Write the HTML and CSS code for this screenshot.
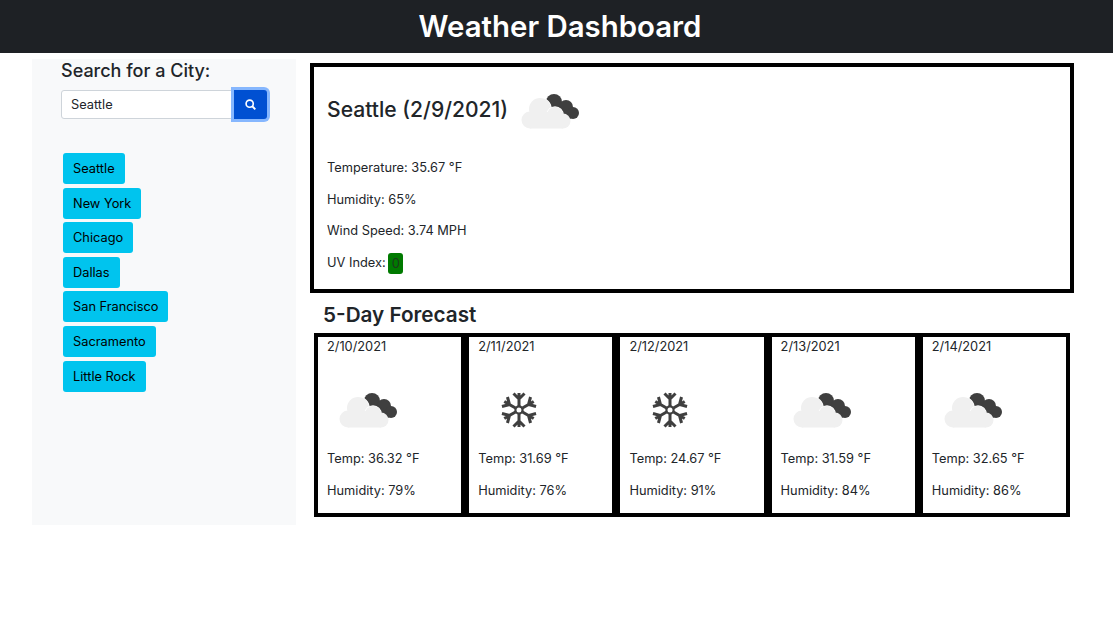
FILE: index.html
```html
<!DOCTYPE html>
<html lang="en">
<head>
  <meta charset="UTF-8" />
  <meta name="viewport" content="width=device-width, initial-scale=1.0"/>
  <title>Weather Dashboard</title>
  <link rel="stylesheet" href="styles.css">
</head>
<body>
  <svg class="icon-defs" aria-hidden="true">
    <symbol id="icon-clouds" viewBox="0 0 70 50">
      <circle cx="38" cy="17" r="8" fill="#3f3f3f"/>
      <circle cx="50" cy="22" r="7" fill="#3f3f3f"/>
      <circle cx="57" cy="28" r="6" fill="#3f3f3f"/>
      <path d="M31 17l20 8 5 8-8 3z" fill="#3f3f3f"/>
      <g fill="#f0f0f0" stroke="#fff" stroke-width="1.5" paint-order="stroke">
        <circle cx="24" cy="24" r="11"/>
        <circle cx="39" cy="30" r="8"/>
      </g>
      <g fill="#f0f0f0">
        <circle cx="14" cy="35" r="8.5"/>
        <circle cx="47" cy="36" r="7.5"/>
        <rect x="14" y="27" width="33" height="16.5"/>
      </g>
    </symbol>
    <symbol id="icon-snow" viewBox="0 0 50 50">
      <g fill="none" stroke="#3f3f3f" stroke-width="3">
        <path d="M24 22V9M18.5 9.5l5.500 5.500 5.500-5.500"/>
        <path d="M24 22V9M18.5 9.5l5.500 5.500 5.500-5.500" transform="rotate(60 24 26)"/>
        <path d="M24 22V9M18.5 9.5l5.500 5.500 5.500-5.500" transform="rotate(120 24 26)"/>
        <path d="M24 22V9M18.5 9.5l5.500 5.500 5.500-5.500" transform="rotate(180 24 26)"/>
        <path d="M24 22V9M18.5 9.5l5.500 5.500 5.500-5.500" transform="rotate(240 24 26)"/>
        <path d="M24 22V9M18.5 9.5l5.500 5.500 5.500-5.500" transform="rotate(300 24 26)"/>
        <circle cx="24" cy="26" r="3.6" stroke-width="2.2"/>
      </g>
    </symbol>
  </svg>

  <header class="top-bar">
    <h1>Weather Dashboard</h1>
  </header>

  <div class="page">
    <aside class="sidebar">
      <h2 class="search-title">Search for a City:</h2>
      <div class="search-group">
        <input class="search-input" type="text" value="Seattle" />
        <button class="search-btn" aria-label="Search">
          <svg viewBox="0 0 16 16" width="11" height="11" fill="none" stroke="#fff">
            <circle cx="6.8" cy="6.8" r="5.2" stroke-width="2.4"/>
            <path d="M10.6 10.6L15 15" stroke-width="2.8"/>
          </svg>
        </button>
      </div>
      <ul class="city-list">
        <li><button class="city-btn">Seattle</button></li>
        <li><button class="city-btn">New York</button></li>
        <li><button class="city-btn">Chicago</button></li>
        <li><button class="city-btn">Dallas</button></li>
        <li><button class="city-btn">San Francisco</button></li>
        <li><button class="city-btn">Sacramento</button></li>
        <li><button class="city-btn">Little Rock</button></li>
      </ul>
    </aside>

    <main class="content">
      <section class="current">
        <div class="current-head">
          <h2>Seattle (2/9/2021)</h2>
          <svg class="current-icon"><use href="#icon-clouds"/></svg>
        </div>
        <p>Temperature: 35.67 °F</p>
        <p>Humidity: 65%</p>
        <p>Wind Speed: 3.74 MPH</p>
        <p>UV Index: <span class="uv">0</span></p>
      </section>

      <h2 class="forecast-title">5-Day Forecast</h2>
      <div class="forecast">
        <div class="day">
          <div class="day-date">2/10/2021</div>
          <svg class="day-icon"><use href="#icon-clouds"/></svg>
          <p>Temp: 36.32 °F</p>
          <p>Humidity: 79%</p>
        </div>
        <div class="day">
          <div class="day-date">2/11/2021</div>
          <svg class="day-icon"><use href="#icon-snow"/></svg>
          <p>Temp: 31.69 °F</p>
          <p>Humidity: 76%</p>
        </div>
        <div class="day">
          <div class="day-date">2/12/2021</div>
          <svg class="day-icon"><use href="#icon-snow"/></svg>
          <p>Temp: 24.67 °F</p>
          <p>Humidity: 91%</p>
        </div>
        <div class="day">
          <div class="day-date">2/13/2021</div>
          <svg class="day-icon"><use href="#icon-clouds"/></svg>
          <p>Temp: 31.59 °F</p>
          <p>Humidity: 84%</p>
        </div>
        <div class="day">
          <div class="day-date">2/14/2021</div>
          <svg class="day-icon"><use href="#icon-clouds"/></svg>
          <p>Temp: 32.65 °F</p>
          <p>Humidity: 86%</p>
        </div>
      </div>
    </main>
  </div>
</body>
</html>
```

FILE: styles.css
```css
* {
  box-sizing: border-box;
}
body {
  margin: 0;
  background: #fff;
  color: #212529;
  font-family: Inter, "Liberation Sans", sans-serif;
  font-size: 12.8px;
  line-height: 19.5px;
}
.icon-defs {
  display: none;
}
h1, h2, p, ul {
  margin: 0;
  padding: 0;
}
.top-bar {
  height: 53px;
  padding-left: 7px;
  background: #1e2125;
  color: #fff;
  text-align: center;
}
.top-bar h1 {
  font-size: 29.4px;
  font-weight: 600;
  line-height: 54px;
}
.page {
  display: flex;
  align-items: flex-start;
  padding: 6px 0 0 32px;
}
.sidebar {
  width: 264px;
  height: 466px;
  padding: 0 29px;
  background: #f8f9fa;
  flex-shrink: 0;
}
.search-title {
  font-size: 18px;
  font-weight: 500;
  line-height: 24px;
}
.search-group {
  display: flex;
  margin-top: 7px;
  height: 29px;
}
.search-input {
  width: 173px;
  height: 29px;
  padding: 0 9px;
  border: 1px solid #ced4da;
  border-radius: 3px 0 0 3px;
  background: #fff;
  color: #212529;
  font-family: inherit;
  font-size: 12.8px;
}
.search-btn {
  display: flex;
  align-items: center;
  justify-content: center;
  width: 33px;
  height: 29px;
  padding: 0;
  border: 0;
  border-radius: 0 3px 3px 0;
  background: #0050d2;
  box-shadow: 0 0 0 3px #86b7fe;
}
.city-list {
  list-style: none;
  margin: 34px 0 0 2px;
}
.city-btn {
  display: block;
  height: 31px;
  margin-bottom: 3.6px;
  padding: 0 10px;
  border: 0;
  border-radius: 3px;
  background: #00c4ee;
  color: #000;
  font-family: inherit;
  font-size: 12.8px;
}
.content {
  width: 764px;
  margin-left: 14px;
  padding-top: 4px;
}
.current {
  height: 230px;
  padding: 0 13px;
  border: 4px solid #000;
}
.current-head {
  display: flex;
  align-items: flex-start;
  height: 85px;
}
.current-head h2 {
  margin-top: 28px;
  font-size: 21.1px;
  font-weight: 500;
  line-height: 30px;
}
.current-icon {
  width: 70px;
  height: 50px;
  margin: 18px 0 0 8px;
}
.current p {
  padding: 6px 0;
  height: 31.5px;
}
.uv {
  display: inline-block;
  width: 15px;
  height: 21px;
  margin-left: -1px;
  border-radius: 3px;
  background: #007a00;
  color: #1c3a1c;
  text-align: center;
  line-height: 21px;
  vertical-align: middle;
}
.forecast-title {
  margin: 7px 0 0 13px;
  font-size: 20.7px;
  font-weight: 600;
  line-height: 30px;
}
.forecast {
  display: flex;
  width: 756px;
  height: 184px;
  margin: 3px 0 0 4px;
}
.day {
  flex: 1;
  height: 184px;
  padding: 0 9px;
  border: 4px solid #000;
}
.day-date {
  line-height: 20px;
}
.day-icon {
  display: block;
  width: 70px;
  height: 50px;
  margin: 27px 0 9px 7px;
}
.day p {
  height: 31.5px;
  padding-top: 6px;
}
```
